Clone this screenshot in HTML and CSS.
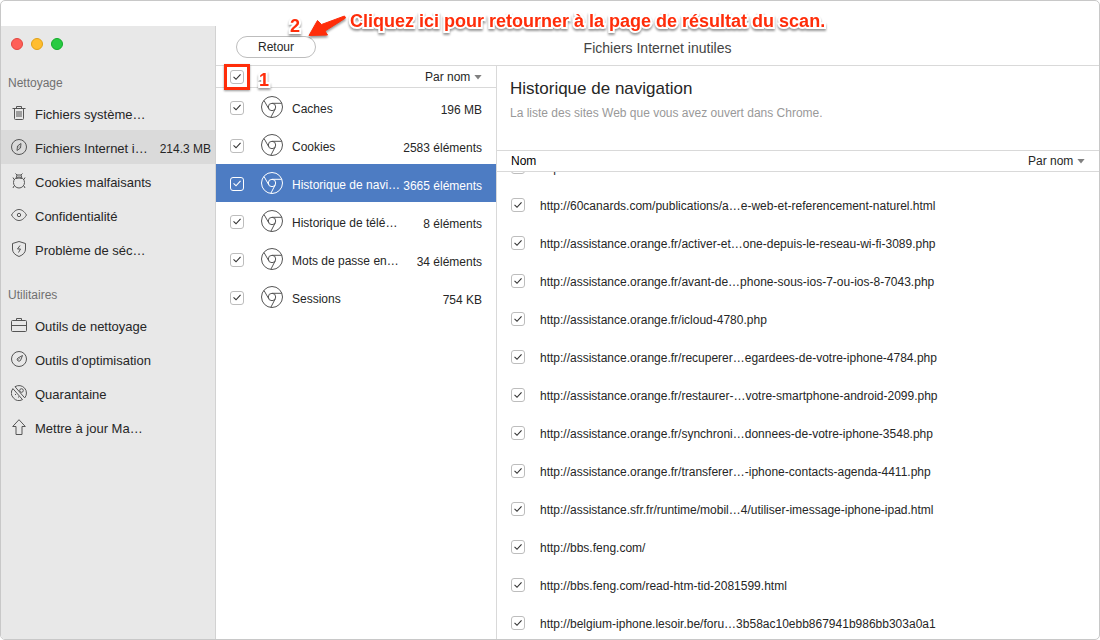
FILE: index.html
```html
<!DOCTYPE html>
<html lang="fr">
<head>
    <meta charset="UTF-8">
    <meta name="viewport" content="width=device-width, initial-scale=1.0">
    <title>Fichiers Internet inutiles</title>
    <link rel="stylesheet" href="styles.css">
</head>
<body>
    <svg class="sprite" aria-hidden="true">
        <symbol id="chrome" viewBox="0 0 24 24">
            <circle cx="12" cy="12" r="10.5"/>
            <circle cx="12" cy="12" r="3.7"/>
            <path d="M12 8.300H21.700M8.700 13.700L4 5.500M15.300 13.700L10.800 22.400"/>
        </symbol>
    </svg>

    <div class="window">
        <aside class="sidebar">
            <div class="lights">
                <span class="light red"></span>
                <span class="light yellow"></span>
                <span class="light green"></span>
            </div>
            <nav>
                <h2>Nettoyage</h2>
                <a href="#" class="nav-item">
                    <svg viewBox="0 0 16 16"><path d="M1.500 3.500h13M5.500 3.500v-2h5v2M3.500 3.500v10q0 1 1 1h7q1 0 1-1v-10M6 6v6M8 6v6M10 6v6"/></svg>
                    <span>Fichiers système…</span>
                </a>
                <a href="#" class="nav-item active">
                    <svg viewBox="0 0 16 16"><circle cx="8" cy="8" r="7.500"/><path d="M10 4.500L9.500 9 6 11.500 6.500 7zM8 7.500v1"/></svg>
                    <span>Fichiers Internet i…</span>
                    <span class="size">214.3 MB</span>
                </a>
                <a href="#" class="nav-item">
                    <svg viewBox="0 0 16 16"><circle cx="8" cy="9.500" r="5.500"/><path d="M5 5.500q3-1 6 0M4.500.500L6 2h4L11.500.500M6 2L5.300 4.500M10 2l.7 2.500M2 4.500l1 2M14 4.500l-1 2M2 15l1-2M14 15l-1-2"/></svg>
                    <span>Cookies malfaisants</span>
                </a>
                <a href="#" class="nav-item">
                    <svg viewBox="0 0 16 16"><path d="M.5 8C3 4 5.500 2.500 8 2.500S13 4 15.500 8C13 12 10.500 13.500 8 13.500S3 12 .5 8z"/><circle cx="8" cy="8" r="1.700"/></svg>
                    <span>Confidentialité</span>
                </a>
                <a href="#" class="nav-item">
                    <svg viewBox="0 0 16 16"><path d="M8 .5L14.500 2.500V8q0 5-6.500 7.500Q1.500 13 1.500 8V2.500zM9 4.500L6.500 8h3L7.500 11.500"/></svg>
                    <span>Problème de séc…</span>
                </a>

                <h2>Utilitaires</h2>
                <a href="#" class="nav-item">
                    <svg viewBox="0 0 16 16"><rect x=".5" y="3.500" width="15" height="11" rx="1"/><path d="M5.500 3.500v-2h5v2M.5 8.500h15"/></svg>
                    <span>Outils de nettoyage</span>
                </a>
                <a href="#" class="nav-item">
                    <svg viewBox="0 0 16 16"><circle cx="8" cy="8" r="7.500"/><path d="M11.500 4.500L9.500 9.500Q8 11 6.500 9.500 5.500 8 7 7zM8.500 7.500l-1 1"/></svg>
                    <span>Outils d'optimisation</span>
                </a>
                <a href="#" class="nav-item">
                    <svg viewBox="0 0 16 16"><path d="M1.900 3.600A7.500 7.500 0 0 0 11.500 14.600L1.900 3.600M4 1.700A7.500 7.500 0 0 1 13.700 12.900L4 1.700"/><circle cx="10.500" cy="5.500" r="1.800"/><path d="M4.500 9v1M7 12h1"/></svg>
                    <span>Quarantaine</span>
                </a>
                <a href="#" class="nav-item">
                    <svg viewBox="0 0 16 16"><path d="M8 .7L14.300 7.500H11v8H5v-8H1.700z"/></svg>
                    <span>Mettre à jour Ma…</span>
                </a>
            </nav>
        </aside>

        <main class="main">
            <header class="topbar">
                <button type="button" class="back">Retour</button>
                <h1>Fichiers Internet inutiles</h1>
            </header>

            <div class="panes">
                <section class="categories">
                    <div class="bar">
                        <div class="select-all">
                            <input type="checkbox" aria-label="Tout sélectionner" checked>
                            <span class="callout">1</span>
                        </div>
                        <div class="sort">
                            <select aria-label="Trier les catégories"><option>Par nom</option></select>
                        </div>
                    </div>
                    <ul>
                        <li class="category">
                            <input type="checkbox" id="c1" checked>
                            <svg><use href="#chrome"/></svg>
                            <label for="c1">Caches</label>
                            <span class="count">196 MB</span>
                        </li>
                        <li class="category">
                            <input type="checkbox" id="c2" checked>
                            <svg><use href="#chrome"/></svg>
                            <label for="c2">Cookies</label>
                            <span class="count">2583 éléments</span>
                        </li>
                        <li class="category selected">
                            <input type="checkbox" id="c3" checked>
                            <svg><use href="#chrome"/></svg>
                            <label for="c3">Historique de navi…</label>
                            <span class="count">3665 éléments</span>
                        </li>
                        <li class="category">
                            <input type="checkbox" id="c4" checked>
                            <svg><use href="#chrome"/></svg>
                            <label for="c4">Historique de télé…</label>
                            <span class="count">8 éléments</span>
                        </li>
                        <li class="category">
                            <input type="checkbox" id="c5" checked>
                            <svg><use href="#chrome"/></svg>
                            <label for="c5">Mots de passe en…</label>
                            <span class="count">34 éléments</span>
                        </li>
                        <li class="category">
                            <input type="checkbox" id="c6" checked>
                            <svg><use href="#chrome"/></svg>
                            <label for="c6">Sessions</label>
                            <span class="count">754 KB</span>
                        </li>
                    </ul>
                </section>

                <section class="details">
                    <div class="intro">
                        <h2>Historique de navigation</h2>
                        <p>La liste des sites Web que vous avez ouvert dans Chrome.</p>
                    </div>
                    <div class="bar">
                        <span>Nom</span>
                        <div class="sort">
                            <select aria-label="Trier les sites"><option>Par nom</option></select>
                        </div>
                    </div>
                    <div class="scroll">
                        <ul class="urls">
                            <li><input type="checkbox" id="u0" checked><label for="u0">http://</label></li>
                            <li><input type="checkbox" id="u1" checked><label for="u1">http://60canards.com/publications/a…e-web-et-referencement-naturel.html</label></li>
                            <li><input type="checkbox" id="u2" checked><label for="u2">http://assistance.orange.fr/activer-et…one-depuis-le-reseau-wi-fi-3089.php</label></li>
                            <li><input type="checkbox" id="u3" checked><label for="u3">http://assistance.orange.fr/avant-de…phone-sous-ios-7-ou-ios-8-7043.php</label></li>
                            <li><input type="checkbox" id="u4" checked><label for="u4">http://assistance.orange.fr/icloud-4780.php</label></li>
                            <li><input type="checkbox" id="u5" checked><label for="u5">http://assistance.orange.fr/recuperer…egardees-de-votre-iphone-4784.php</label></li>
                            <li><input type="checkbox" id="u6" checked><label for="u6">http://assistance.orange.fr/restaurer-…votre-smartphone-android-2099.php</label></li>
                            <li><input type="checkbox" id="u7" checked><label for="u7">http://assistance.orange.fr/synchroni…donnees-de-votre-iphone-3548.php</label></li>
                            <li><input type="checkbox" id="u8" checked><label for="u8">http://assistance.orange.fr/transferer…-iphone-contacts-agenda-4411.php</label></li>
                            <li><input type="checkbox" id="u9" checked><label for="u9">http://assistance.sfr.fr/runtime/mobil…4/utiliser-imessage-iphone-ipad.html</label></li>
                            <li><input type="checkbox" id="u10" checked><label for="u10">http://bbs.feng.com/</label></li>
                            <li><input type="checkbox" id="u11" checked><label for="u11">http://bbs.feng.com/read-htm-tid-2081599.html</label></li>
                            <li><input type="checkbox" id="u12" checked><label for="u12">http://belgium-iphone.lesoir.be/foru…3b58ac10ebb867941b986bb303a0a1</label></li>
                        </ul>
                    </div>
                </section>
            </div>

            <div class="hint">
                <span class="callout">2</span>
                <svg class="arrow" viewBox="0 0 42 26"><path d="M38.500 2L15.500 10.500 11.500 6.500 3 21.500 21.500 21 19 17 39.500 4z"/></svg>
                <p class="callout">Cliquez ici pour retourner à la page de résultat du scan.</p>
            </div>
        </main>
    </div>
</body>
</html>
```
FILE: styles.css
```css
:root {
    --line: #d9d9d9;
    --frame: #c8c8c8;
    --blue: #4d7cc3;
    --red: #ff2d0a;
    --text: #262626;
}

* {
    box-sizing: border-box;
}

body {
    margin: 0;
    background: #fff;
    color: var(--text);
    font-family: "Liberation Sans", Arial, sans-serif;
    font-size: 12px;
    line-height: 16px;
}

h1, h2, p, ul {
    margin: 0;
    padding: 0;
    font-weight: normal;
}

ul {
    list-style: none;
}

svg {
    fill: none;
    stroke: #555;
    stroke-width: 1;
    flex: none;
}

.sprite {
    display: none;
}

.window {
    display: flex;
    height: 100vh;
    padding-top: 25px;
    border: 1px solid var(--frame);
    border-radius: 5px;
    overflow: hidden;
}

/* Sidebar */
.sidebar {
    width: 215px;
    flex: none;
    background: #e8e8e8;
    border-right: 1px solid #d2d2d2;
}

.lights {
    display: flex;
    gap: 8px;
    padding: 12px 10px 16px;
}

.light {
    width: 12px;
    height: 12px;
    border-radius: 50%;
    border: 1px solid;
}

.red {
    background: #ff5f57;
    border-color: #e2463f;
}

.yellow {
    background: #ffbd2e;
    border-color: #e1a116;
}

.green {
    background: #28ca42;
    border-color: #12ac28;
}

.sidebar h2 {
    height: 30px;
    padding: 9px 7px 0;
    font-size: 12px;
    color: #707070;
}

.nav-item + h2 {
    height: 42px;
    padding-top: 21px;
}

.nav-item {
    display: flex;
    align-items: center;
    gap: 8px;
    height: 34px;
    padding: 0 4px 0 10px;
    font-size: 13px;
    color: var(--text);
    text-decoration: none;
    white-space: nowrap;
}

.nav-item.active {
    background: #dadada;
}

.nav-item svg {
    width: 16px;
    height: 16px;
}

.nav-item span {
    padding-top: 3px;
}

.nav-item .size {
    margin-left: auto;
    font-size: 12px;
}

/* Main area */
.main {
    position: relative;
    flex: 1;
    min-width: 0;
    display: flex;
    flex-direction: column;
}

.topbar {
    display: grid;
    grid-template-columns: 1fr auto 1fr;
    align-items: center;
    height: 40px;
    padding: 2px 20px 0;
    border-bottom: 1px solid var(--line);
}

.topbar h1 {
    padding-top: 2px;
    font-size: 14px;
    color: #444;
}

.back {
    width: 80px;
    height: 22px;
    padding: 0;
    border: 1px solid #bdbdbd;
    border-radius: 11px;
    background: #fff;
    color: var(--text);
    font: inherit;
}

.panes {
    display: flex;
    flex: 1;
    min-height: 0;
}

.bar {
    display: flex;
    align-items: center;
    justify-content: space-between;
    height: 22px;
    padding: 0 14px;
    border-bottom: 1px solid var(--line);
    color: #000;
}

.sort {
    display: flex;
    align-items: center;
    gap: 3px;
}

.sort::after {
    content: "";
    width: 8px;
    height: 5px;
    background: #808080;
    clip-path: polygon(0 0, 100% 0, 50% 100%);
}

.sort select {
    appearance: none;
    padding: 0;
    border: 0;
    background: none;
    color: var(--text);
    font: inherit;
}

input[type="checkbox"] {
    appearance: none;
    flex: none;
    width: 14px;
    height: 14px;
    margin: 0;
    border: 1px solid #bdbdbd;
    border-radius: 3px;
    color: #333;
}

input[type="checkbox"]:checked::after {
    content: "";
    display: block;
    width: 12px;
    height: 12px;
    background: currentColor;
    clip-path: polygon(18% 52%, 24% 45%, 42% 62%, 76% 24%, 83% 31%, 42% 76%);
}

.categories {
    width: 281px;
    flex: none;
    border-right: 1px solid var(--line);
}

.categories .bar {
    padding-top: 1px;
}

.category {
    display: flex;
    align-items: center;
    height: 38px;
    padding: 1px 14px 0;
    white-space: nowrap;
}

.category svg {
    width: 24px;
    height: 24px;
    margin: 0 8px 2px 16px;
}

.category label {
    padding-top: 2px;
}

.category .count {
    margin-left: auto;
    padding-top: 4px;
}

.selected {
    background: var(--blue);
    color: #fff;
}

.selected svg {
    stroke: #fff;
}

.selected input[type="checkbox"] {
    border-color: #fff;
    color: #fff;
}

.details {
    flex: 1;
    min-width: 0;
    display: flex;
    flex-direction: column;
}

.intro {
    height: 85px;
    padding: 11px 13px;
    border-bottom: 1px solid var(--line);
}

.intro h2 {
    font-size: 17px;
    line-height: 24px;
}

.intro p {
    padding-top: 4px;
    color: #999;
}

.details .bar {
    height: 21px;
}

.scroll {
    flex: 1;
    min-height: 0;
    overflow-y: auto;
    scrollbar-width: none;
}

/* first row is scrolled under the header */
.urls {
    margin-top: -24px;
}

.urls li {
    display: flex;
    align-items: center;
    gap: 15px;
    height: 38px;
    padding: 0 14px;
    white-space: nowrap;
}

.urls label {
    padding-top: 2px;
}

/* Annotations */
.callout {
    color: var(--red);
    font-size: 18px;
    font-weight: bold;
    line-height: 20px;
    -webkit-text-stroke: 4px #fff;
    paint-order: stroke fill;
    filter: drop-shadow(0 2px 1px rgba(0, 0, 0, 0.4));
    white-space: nowrap;
}

.select-all {
    position: relative;
    display: flex;
}

.select-all::before {
    content: "";
    position: absolute;
    inset: -6px;
    border: 3px solid var(--red);
    box-shadow: 0 1px 2px rgba(0, 0, 0, 0.4);
}

.select-all .callout {
    position: absolute;
    left: 29px;
    top: 0;
}

.hint {
    position: absolute;
    left: 74px;
    top: -15px;
    display: flex;
    pointer-events: none;
}

.hint span {
    padding-top: 5px;
}

.arrow {
    width: 42px;
    height: 26px;
    margin: 3px 2px 0 6px;
    fill: var(--red);
    stroke: var(--red);
    stroke-linejoin: round;
    filter: drop-shadow(0 2px 1px rgba(0, 0, 0, 0.4));
}
```
